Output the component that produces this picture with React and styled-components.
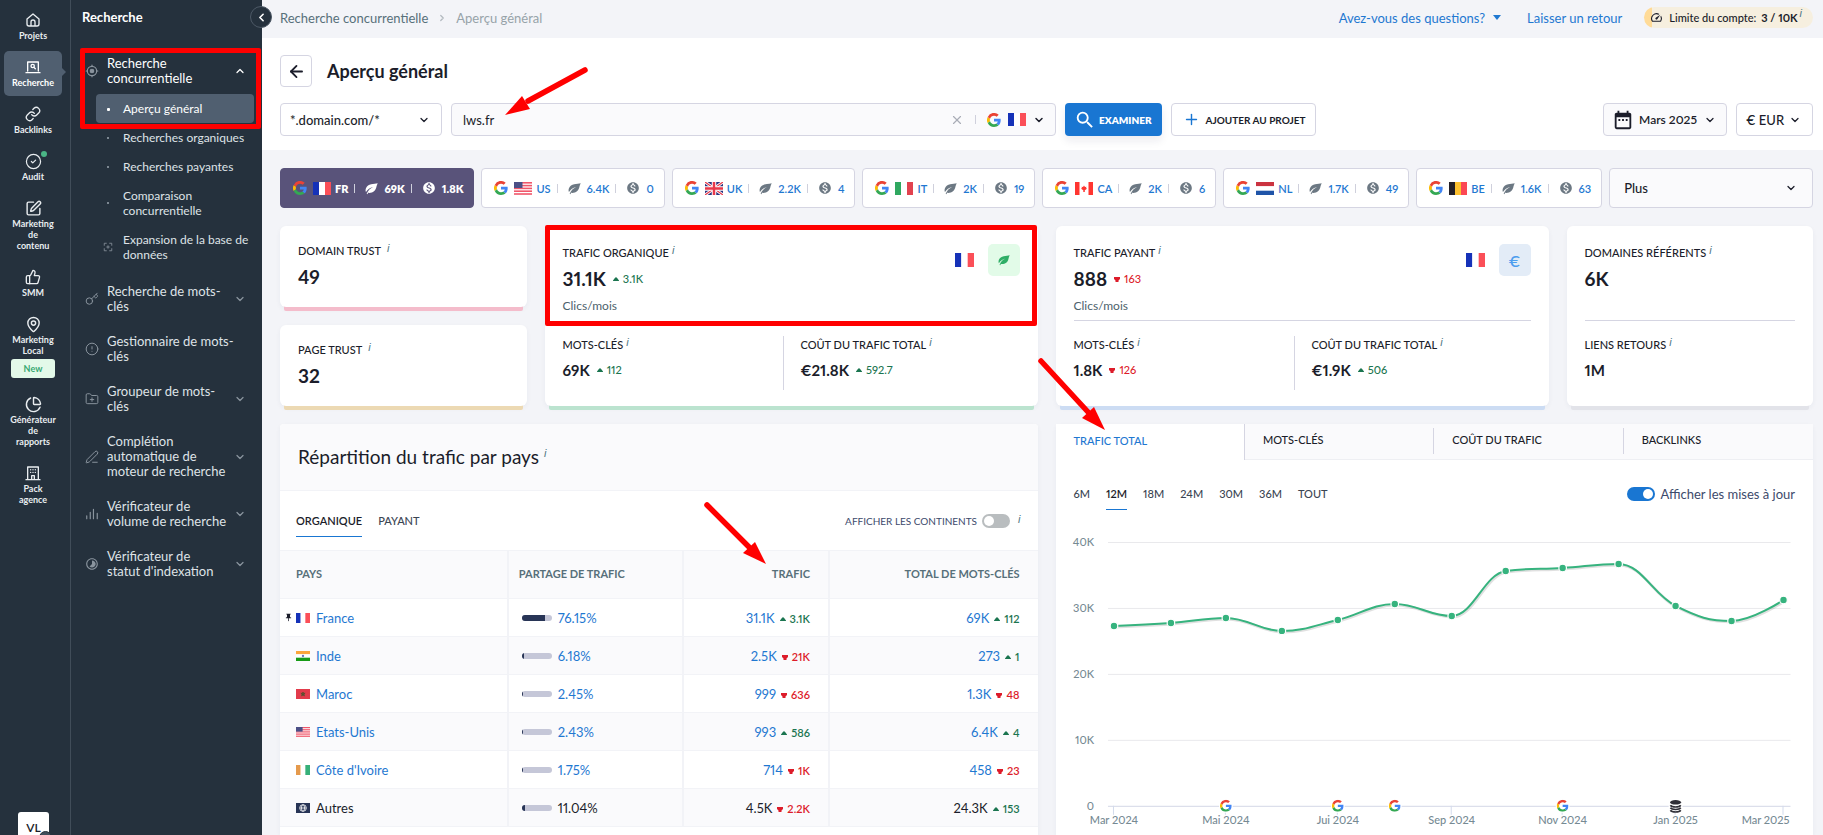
import React from "react";
import styled, { createGlobalStyle, css } from "styled-components";
import {
  ArrowLeft, ChartPie, ChevronDown, ChevronLeft, ChevronRight, ChevronUp, CircleAlert, CircleCheck,
  FolderPlus, Key, Link as LinkIcon, MapPin, PenLine, Plus, SquarePen, ThumbsUp, X,
} from "lucide-react";
import { MdDateRange, MdMonetizationOn, MdPushPin, MdSearch, MdSpeed, MdTimelapse } from "react-icons/md";

const c = {
  side: "#25313d", sideActive: "#505f70", bg: "#f3f4f8", soft: "#fafafc", line: "#f2f3f7",
  border: "#d5d5e2", text: "#1b1d2a", blue: "#1f78d1", green: "#1b7550", red: "#dd1c2a",
  muted: "#57707a", mark: "#ff0000",
};

const Global = createGlobalStyle`
  *, *::before, *::after { box-sizing: border-box; }
  body { margin: 0; background: ${c.bg}; }
  body, button, input, select { font-family: Lato, "Noto Sans", sans-serif; color: ${c.text}; font-variant-numeric: proportional-nums; }
  button { padding: 0; border: 0; background: none; text-align: inherit; cursor: pointer; }
  a { color: inherit; text-decoration: none; }
  svg { flex: none; display: block; }
  h1, h2, p, ul { margin: 0; padding: 0; }
`;

const Shell = styled.div`
  display: flex; height: 100vh; overflow: hidden;
`;

/* ---------- rail ---------- */
const Rail = styled.nav`
  display: flex; flex-direction: column; width: 71px; flex: none; padding: 4px 0 0;
  background: ${c.side}; border-right: 1px solid #414d59;
`;
const RailList = styled.ul`
  list-style: none; flex: 1; display: flex; flex-direction: column; gap: 2px; padding: 0 8px 0 4px;
`;
const RailLink = styled.a`
  position: relative; display: flex; flex-direction: column; align-items: center; gap: 2px;
  padding: 8px 0; border-radius: 5px; color: #e9edf0; font-size: 9px; font-weight: 700;
  line-height: 11px; text-align: center;
  ${(p) => p.$active && css`
    background: ${c.sideActive}; color: #fff;
    &::after { content: ""; position: absolute; right: -4px; top: 17px;
      border: 4px solid transparent; border-right: 0; border-left-color: ${c.sideActive}; }
  `}
`;
const Glyph = styled.span`height: 16px; display: grid; place-items: center;`;
const RailLabel = styled.span`white-space: pre-line;`;
const Dot = styled.span`
  position: absolute; top: 6px; right: 15px; width: 6px; height: 6px; border-radius: 50%; background: #4ab586;
`;
const NewBadge = styled.span`
  width: 44px; margin-top: 1px; padding: 4px 0; border-radius: 3px; background: #e3f9e9; color: #36a872;
`;
const Avatar = styled.button`
  position: relative; align-self: center; width: 31px; height: 31px; margin: 0 3px -8px 0; border-radius: 3px 3px 0 0;
  background: #fff; font-size: 12px; font-weight: 600; text-align: center; flex: none;
  &::after { content: ""; position: absolute; right: -3px; bottom: -1px; width: 13px; height: 13px;
    border-radius: 50%; background: #3f4d5b; border: 1px solid #25313d; }
`;

/* ---------- second level menu ---------- */
const Side = styled.nav`
  position: relative; width: 191px; flex: none; background: ${c.side}; color: #dfe3e7;
`;
const SideTitle = styled.p`
  padding: 8px 11px 20px; font-size: 13px; line-height: 18px; font-weight: 700; color: #fff;
`;
const Collapse = styled.button`
  position: absolute; z-index: 2; right: -10px; top: 6px; width: 22px; height: 22px; border-radius: 50%;
  display: grid; place-items: center; background: ${c.side}; border: 1px solid #4d5966; color: #fff;
`;
const Marked = styled.div`
  position: relative;
  &::after { content: ""; position: absolute; inset: 2px 1px -6px 9px; border: 5px solid ${c.mark};
    border-radius: 2px; pointer-events: none; }
`;
const SideItem = styled.a`
  display: flex; align-items: center; gap: 8px; padding: 10px 16px 10px 14px;
  font-size: 13px; line-height: 15px; color: ${(p) => (p.$open ? "#fff" : "#dfe3e7")};
  ${(p) => p.$open && "padding-bottom: 8px;"}
  svg { color: #8a949e; }
  svg:last-child { color: ${(p) => (p.$open ? "#fff" : "#8a949e")}; }
`;
const SideText = styled.span`flex: 1; white-space: pre-line;`;
const SubItem = styled.a`
  display: flex; align-items: center; margin: 0 8px 0 25px; padding: 7px 0 7px 27px; border-radius: 4px;
  font-size: 12px; line-height: 15px; position: relative; white-space: pre-line;
  ${(p) => p.$active && `background: ${c.sideActive}; color: #fff;`}
`;
const Bullet = styled.span`
  position: absolute; left: 11px; top: 50%; width: ${(p) => (p.$big ? 3 : 2)}px; height: ${(p) => (p.$big ? 3 : 2)}px;
  margin-top: -1px; background: ${(p) => (p.$big ? "#fff" : "#9aa4ae")}; border-radius: 1px;
`;
const BulletIcon = styled.span`position: absolute; left: 7px; top: 50%; margin-top: -5px; color: #8a949e;`;
const SubGroup = styled.div`padding-bottom: 5px;`;

/* ---------- main ---------- */
const Main = styled.main`
  flex: 1; min-width: 0; overflow-y: auto; scrollbar-width: none;
`;
const TopBar = styled.header`
  display: flex; align-items: center; height: 38px; padding: 0 10px 3px 18px; font-size: 13px;
`;
const Crumbs = styled.nav`
  display: flex; align-items: center; gap: 9px; flex: 1; color: ${c.muted};
  svg { color: #b3bac0; }
`;
const Current = styled.span`color: #97a3a9;`;
const TopLink = styled.a`
  display: flex; align-items: center; gap: 8px; margin-right: ${(p) => p.$gap}px; color: ${c.blue};
`;
const Caret = styled.span`border: 4px solid transparent; border-top: 5px solid ${c.blue}; border-bottom: 0;`;
const Limit = styled.span`
  display: flex; align-items: center; height: 21px; padding: 0 11px 0 6px; border-radius: 11px; font-size: 11px;
  font-weight: 500; background: linear-gradient(90deg, #ffdb98 8px, #f6efdf 8px);
  b { margin-left: 5px; font-weight: 700; }
  svg { margin-right: 6px; }
`;
const Tip = styled.sup`
  margin: ${(p) => p.$top ?? 0}px 0 0 ${(p) => p.$gap ?? 3}px; align-self: flex-start;
  font: italic 11px/11px "Liberation Sans", sans-serif; color: #4f7684;
`;
const Head = styled.section`background: #fff; padding: 17px 10px 14px 18px;`;
const TitleRow = styled.div`display: flex; align-items: center; gap: 15px; margin-bottom: 16px;`;
const Back = styled.button`
  width: 32px; height: 32px; border: 1px solid ${c.border}; border-radius: 4px; display: grid; place-items: center;
`;
const Title = styled.h1`font-size: 18px; line-height: 24px; font-weight: 700;`;
const Controls = styled.div`display: flex; gap: 9px;`;
const controlBox = css`
  height: 33px; border: 1px solid ${c.border}; border-radius: 4px; background: #fff;
`;
const SelectBox = styled.div`
  position: relative; ${controlBox} ${(p) => p.$w && `width: ${p.$w}px;`} ${(p) => p.$grow && "flex: 1;"}
  ${(p) => p.$tall && "height: 40px;"} ${(p) => p.$soft && `background: ${c.soft};`}
  svg { position: absolute; right: ${(p) => p.$right ?? 11}px; top: 50%; margin-top: -6px; pointer-events: none; }
  select { appearance: none; width: 100%; height: 100%; border: 0; background: none;
    padding: 0 0 0 ${(p) => p.$pad ?? 9}px; font-size: 13px; font-weight: 500; }
`;
const Search = styled.div`
  position: relative; flex: 0 1 605px; display: flex; align-items: center; gap: 11px; padding: 0 10px 0 0;
  ${controlBox} background: ${c.soft};
  input { flex: 1; min-width: 0; height: 100%; border: 0; outline: 0; background: none; padding: 0 0 0 11px; font-size: 13px; }
`;
const Clear = styled.button`color: #a9adb7; display: grid;`;
const Engine = styled.button`display: flex; align-items: center; gap: 7px;`;
const Sep = styled.span`width: 1px; height: 9px; background: #cfd0dc;`;
const Primary = styled.button`
  display: flex; align-items: center; gap: 3px; height: 33px; padding: 0 10px 0 9px; border-radius: 4px; background: #1976d2;
  color: #fff; font-size: 10px; font-weight: 800; box-shadow: 0 5px 9px rgba(20, 30, 80, .08);
`;
const Secondary = styled.button`
  display: flex; align-items: center; gap: 6px; ${controlBox} padding: 0 9px 0 11px; font-size: 10px; font-weight: 700;
  svg { color: #1976d2; }
`;
const Spacer = styled.span`flex: 1;`;
const DateButton = styled.button`
  display: flex; align-items: center; gap: 5px; ${controlBox} background: ${c.soft}; padding: 0 10px 0 8px;
  font-size: 12px; font-weight: 600;
  svg:last-child { margin-left: 2px; }
`;
const Page = styled.div`display: grid; gap: 18px; padding: 18px 10px 0 18px;`;
const Pills = styled.div`display: flex; gap: 7px;`;
const Pill = styled.button`
  display: flex; align-items: center; height: 40px; padding: 0 10px 0 12px; border-radius: 4px; font-size: 11px;
  font-weight: ${(p) => (p.$active ? 800 : 600)};
  border: 1px solid ${(p) => (p.$active ? "#59537a" : c.border)};
  background: ${(p) => (p.$active ? "#59537a" : "#fff")}; color: ${(p) => (p.$active ? "#fff" : c.blue)};
`;
const PillFlag = styled.span`margin-left: 6px;`;
const PillCode = styled.span`margin: 0 6px 0 4px;`;
const PillStat = styled.span`
  display: flex; align-items: center; gap: 6px; margin: 0 ${(p) => (p.$last ? 0 : 6)}px 0 10px;
  svg { color: ${(p) => (p.$active ? "#fff" : "#6c7883")}; }
`;

/* ---------- stat cards ---------- */
const Cards = styled.div`display: grid; grid-template-columns: 1fr 2fr 2fr 1fr; gap: 18px;`;
const Stack = styled.div`display: grid; gap: 18px;`;
const Card = styled.section`
  position: relative; min-width: 0; border-radius: 6px; background: #fff; padding: 17px 18px 0;
  height: ${(p) => (p.$short ? 81 : 180)}px;
  box-shadow: 0 8px 0 -4px ${(p) => p.$tone}, 0 2px 5px rgba(40, 50, 90, .05);
  ${(p) => p.$marked && `&::after { content: ""; position: absolute; inset: -1px 1px 80px 0; border: 5px solid ${c.mark}; border-radius: 2px; pointer-events: none; }`}
`;
const Label = styled.div`
  display: flex; font-size: 11px; line-height: 16px; font-weight: 500; white-space: nowrap;
`;
const Value = styled.div`
  display: flex; align-items: center; margin-top: ${(p) => (p.$small ? 8 : 9)}px; font-weight: 700;
  font-size: ${(p) => (p.$small ? 15 : 19)}px; line-height: 18px;
`;
const Delta = styled.span`
  display: inline-flex; align-items: baseline; gap: 4px; margin-left: ${(p) => (p.$cell ? 5 : 7)}px;
  font-size: 11px; font-weight: ${(p) => (p.$cell ? 600 : 500)}; color: ${(p) => (p.$up ? c.green : c.red)};
`;
const Top = styled.div`
  display: flex; justify-content: space-between; height: 78px; padding-top: 2px; border-bottom: 1px solid ${(p) => (p.$plain ? "transparent" : c.border)};
`;
const Unit = styled.p`margin-top: 9px; font-size: 12px; line-height: 18px; color: #4d626c;`;
const Badges = styled.div`display: flex; align-items: center; gap: 14px; height: 32px; margin-top: -1px;`;
const IconTile = styled.span`
  width: 32px; height: 32px; border-radius: 5px; display: grid; place-items: center;
  background: ${(p) => p.$bg}; color: ${(p) => p.$fg}; font-size: 16px; font-weight: 600;
`;
const Bottom = styled.div`
  display: grid; grid-template-columns: ${(p) => (p.$single ? "1fr" : "238px 1fr")}; padding-top: 15px;
`;
const Metric = styled.div`
  height: 54px; padding-top: 1px; ${(p) => p.$divided && `border-left: 1px solid ${c.border}; padding-left: 17px; margin-left: -18px;`}
`;

/* ---------- bottom panels ---------- */
const Panels = styled.div`display: grid; grid-template-columns: 1fr 1fr; gap: 18px;`;
const Panel = styled.section`
  position: relative; min-width: 0; background: #fff; border-radius: 4px 4px 0 0; box-shadow: 0 2px 5px rgba(40, 50, 90, .05);
`;
const PanelHead = styled.div`
  height: 67px; padding: 20px 18px; background: ${c.soft}; border-bottom: 1px solid ${c.line}; border-radius: 4px 4px 0 0;
`;
const PanelTitle = styled.h2`display: flex; font-size: 19px; line-height: 26px; font-weight: 400;`;
const TabBar = styled.div`display: flex; align-items: center; height: 59px; padding: 0 17px 0 16px; gap: 16px;`;
const ChartBar = styled.div`
  display: flex; align-items: center; gap: 16px; height: 65px; padding: 2px 18px 0;
`;
const Tab = styled.button`
  height: 33px; font-size: 11px; font-weight: ${(p) => (p.$active ? 600 : 500)};
  color: ${(p) => (p.$active ? c.text : "#3b4553")};
  border-bottom: 1px solid ${(p) => (p.$active ? "#1976d2" : "transparent")};
`;
const ToggleGroup = styled.span`display: flex; align-items: center; gap: 8px; margin-left: auto;`;
const Toggle = styled.label`
  display: flex; align-items: center; gap: 5px; margin-left: auto; color: #3d4a6b; font-size: ${(p) => p.$size}px;
`;
const Switch = styled.input`
  appearance: none; position: relative; width: 28px; height: 14px; margin: 0; border-radius: 7px; background: #b9bdbf;
  &::before { content: ""; position: absolute; top: 2px; left: 2px; width: 10px; height: 10px; border-radius: 50%; background: #fff; }
  &:checked { background: #1976d2; }
  &:checked::before { left: 16px; }
`;
const Table = styled.table`
  width: 100%; table-layout: fixed; border-collapse: separate; border-spacing: 0; font-size: 13px;
  th { height: 49px; background: ${c.soft}; font-size: 11px; font-weight: 700; color: ${c.muted}; border-top: 1px solid ${c.line}; text-align: left; padding-bottom: 3px; }
  td { height: 38px; color: ${c.blue}; }
  th, td { padding-left: 10px; padding-right: 18px; border-bottom: 1px solid ${c.line}; border-right: 2px solid ${c.line}; }
  th:first-child, td:first-child { padding-left: 16px; }
  th:last-child, td:last-child { border-right: 0; }
  th:nth-child(n+3), td:nth-child(n+3) { text-align: right; padding-left: 0; }
  tbody tr:nth-child(even) { background: ${c.soft}; }
  tbody tr:last-child td { color: ${c.text}; }
`;
const Country = styled.span`display: flex; align-items: center; gap: 6px; position: relative;`;
const Pin = styled.span`position: absolute; left: -12px;`;
const Share = styled.span`display: flex; align-items: center; gap: 6px; padding-left: 3px;`;
const Bar = styled.span`
  width: 30px; height: 6px; border-radius: 3px; background: #c5c7d8; overflow: hidden;
  span { display: block; height: 100%; background: #283556; }
`;
const ChartTabs = styled.div`
  display: grid; grid-template-columns: repeat(4, 1fr); height: 36px; background: ${c.soft};
`;
const ChartTab = styled.button`
  position: relative; padding: 0 0 4px 18px; font-size: 11px; font-weight: 500;
  ${(p) => p.$active
    ? `background: #fff; color: ${c.blue}; border-right: 1px solid ${c.border};`
    : `border-bottom: 1px solid #eeeff3;`}
  ${(p) => p.$split && `&::after { content: ""; position: absolute; right: 0; top: 4px; height: 26px; width: 1px; background: ${c.border}; }`}
`;
const Chart = styled.svg`
  width: 100%; height: auto;
  text { font-size: 11px; font-weight: 500; fill: #768a93; }
`;
const ArrowSvg = styled.svg`
  position: absolute; z-index: 3; left: 0; top: 0; pointer-events: none; overflow: visible;
`;

/* ---------- drawings ---------- */
const Google = ({ size = 14 }) => (
  <svg width={size} height={size} viewBox="0 0 48 48" aria-hidden="true">
    <path fill="#fbbc05" d="M10.5 28.6A14.6 14.6 0 0 1 10.5 19.4l-8-6.1a24 24 0 0 0 0 21.4z" />
    <path fill="#ea4335" d="M24 9.5c3.5 0 6.7 1.2 9.2 3.6l6.900-6.900A24 24 0 0 0 2.500 13.300l8 6.100C12.400 13.700 17.700 9.500 24 9.500z" />
    <path fill="#34a853" d="M24 48c6.500 0 11.900-2.100 15.900-5.800l-7.700-6c-2.200 1.500-4.900 2.300-8.200 2.300-6.300 0-11.600-4.200-13.500-9.900l-8 6.100A24 24 0 0 0 24 48z" />
    <path fill="#4285f4" d="M46.900 24.500c0-1.600-.2-3.100-.4-4.500H24v9.100h12.900a11 11 0 0 1-4.700 7.100l7.700 6c4.500-4.200 7-10.300 7-17.700z" />
  </svg>
);
const Leaf = ({ size = 13 }) => (
  <svg width={size} height={size} viewBox="0 0 24 24" fill="currentColor" aria-hidden="true">
    <path d="M23.500 2.500C17 4.500 5 3 1.800 11.500c-1 2.700-.9 5 0 7C5 13.500 9 10.800 15 9.200 9.500 11.800 6 15 3 21.800l1.700.6.900-2.400c9 .8 13.700-3.800 15.200-9.700.8-3.300 1.400-5.500 2.700-7.800z" />
  </svg>
);

const bandsV = (a, b, d) => <><path fill={a} d="M0 0h6v13H0z" /><path fill={b} d="M6 0h6v13H6z" /><path fill={d} d="M12 0h6v13h-6z" /></>;
const bandsH = (a, b, d) => <><path fill={a} d="M0 0h18v4.300H0z" /><path fill={b} d="M0 4.300h18v4.400H0z" /><path fill={d} d="M0 8.700h18V13H0z" /></>;
const flags = {
  FR: bandsV("#1632b8", "#fff", "#fb4f58"),
  IT: bandsV("#2fa860", "#fff", "#e2424f"),
  BE: bandsV("#231f26", "#fdc02f", "#fb4753"),
  CI: bandsV("#e59a4c", "#fff", "#36b079"),
  NL: bandsH("#cb3340", "#fff", "#1f54a8"),
  IN: <>{bandsH("#fba63c", "#fff", "#179b17")}<circle cx="9" cy="6.500" r="1.500" fill="#6a76b8" /></>,
  MA: <><path fill="#e23b4b" d="M0 0h18v13H0z" /><path fill="#57502f" d="M9 4l.8 1.700h1.900l-1.500 1.200.6 2L9 7.800l-1.800 1.100.6-2-1.500-1.200h1.900z" stroke="#57502f" /></>,
  US: <><path fill="#fff" d="M0 0h18v13H0z" />{[0, 1, 2, 3, 4].map((i) => <path key={i} fill="#f0566a" d={`M0 ${i * 2.8}h18v1.600H0z`} />)}<path fill="#4b4f86" d="M0 0h8.500v6H0z" /></>,
  UK: <><path fill="#29337e" d="M0 0h18v13H0z" /><path stroke="#fff" strokeWidth="3" d="M0 0l18 13M18 0L0 13" /><path stroke="#e8384a" strokeWidth="1.200" d="M0 0l18 13M18 0L0 13" /><path stroke="#fff" strokeWidth="4.500" d="M9 0v13M0 6.500h18" /><path stroke="#e8384a" strokeWidth="2.500" d="M9 0v13M0 6.500h18" /></>,
  CA: <><path fill="#fff" d="M0 0h18v13H0z" /><path fill="#ff3530" d="M0 0h4.500v13H0zM13.500 0H18v13h-4.500zM9 3.500l1 1.500 1.500-.2-.5 1.200 1 .8-2.200 1.400V10h-1.500V8.200L6 6.800l1-.8-.5-1.200L8 5z" /></>,
  XX: <><path fill="#283556" d="M0 0h18v13H0z" /><g fill="none" stroke="#fff"><circle cx="9" cy="6.500" r="4.300" /><ellipse cx="9" cy="6.500" rx="2" ry="4.300" /><path d="M5 6.500h8" /></g></>,
};
const Flag = ({ code, w = 18, h = 13 }) => (
  <svg width={w} height={h} viewBox="0 0 18 13" preserveAspectRatio="none" aria-hidden="true">{flags[code]}</svg>
);
const Stroke = ({ size = 16, w = 2, children }) => (
  <svg width={size} height={size} viewBox="0 0 24 24" fill="none" stroke="currentColor" strokeWidth={w} strokeLinecap="round" strokeLinejoin="round" aria-hidden="true">{children}</svg>
);
const Triangle = ({ up }) => (
  <svg width="6" height="7" viewBox="0 0 6 7" aria-hidden="true">
    <path fill="currentColor" d={up ? "M3 1 4.500 2.500 6 4.500V5H0v-.5l1.500-2z" : "M0 1h6v2L4.500 4.500V6h-3V4.500L0 3z"} />
  </svg>
);
const Trend = ({ up, value, cell }) => <Delta $up={up} $cell={cell}><Triangle up={up} />{value}</Delta>;

const Arrow = ({ from, head: [tip, a, b, neck] }) => (
  <ArrowSvg width="1" height="1" aria-hidden="true">
    <path d={`M${from.join(" ")}L${neck.join(" ")}`} stroke={c.mark} strokeWidth="5.500" strokeLinecap="round" />
    <path d={`M${tip.join(" ")}L${a.join(" ")}L${b.join(" ")}z`} fill={c.mark} />
  </ArrowSvg>
);

/* ---------- data ---------- */
const rail = [
  { label: "Projets", icon: <Stroke><path d="M3 10.500 12 3l9 7.500V18a3 3 0 0 1-3 3H6a3 3 0 0 1-3-3zM9 21v-6a3 3 0 0 1 6 0v6" /></Stroke> },
  { label: "Recherche", active: true, icon: <Stroke><path d="M4 18V4.500h16V18M1.500 20.500h21" /><circle cx="11.500" cy="10.500" r="2.500" /><path d="m13.500 12.500 2 2.200" /></Stroke> },
  { label: "Backlinks", icon: <LinkIcon size={16} /> },
  { label: "Audit", icon: <CircleCheck size={17} strokeWidth={1.7} />, dot: true },
  { label: "Marketing\nde\ncontenu", icon: <SquarePen size={17} /> },
  { label: "SMM", icon: <ThumbsUp size={16} /> },
  { label: "Marketing\nLocal", icon: <MapPin size={17} />, badge: "New" },
  { label: "Générateur\nde\nrapports", icon: <ChartPie size={17} /> },
  { label: "Pack\nagence", icon: <Stroke><path d="M4 21V3h16v18M1.500 22h21M10 21v-5h4v5M8.500 7v.1M12 7v.1M15.500 7v.1M8.500 11v.1M12 11v.1M15.500 11v.1" /></Stroke> },
];
const menu = [
  { label: "Recherche de mots-\nclés", icon: <Key size={14} strokeWidth={1.7} />, more: true },
  { label: "Gestionnaire de mots-\nclés", icon: <CircleAlert size={14} strokeWidth={1.7} /> },
  { label: "Groupeur de mots-\nclés", icon: <FolderPlus size={14} strokeWidth={1.7} />, more: true },
  { label: "Complétion\nautomatique de\nmoteur de recherche", icon: <PenLine size={14} strokeWidth={1.7} />, more: true },
  { label: "Vérificateur de\nvolume de recherche", icon: <Stroke size={14}><path d="M3 20v-5M9 20V9M14.500 20V4M21 20V11" /></Stroke>, more: true },
  { label: "Vérificateur de\nstatut d'indexation", icon: <MdTimelapse size={14} />, more: true },
];
const markets = [
  ["FR", "69K", "1.8K"], ["US", "6.4K", "0"], ["UK", "2.2K", "4"], ["IT", "2K", "19"],
  ["CA", "2K", "6"], ["NL", "1.7K", "49"], ["BE", "1.6K", "63"],
];
const rows = [
  ["FR", "France", 76.15, "31.1K", true, "3.1K", "69K", true, "112"],
  ["IN", "Inde", 6.18, "2.5K", false, "21K", "273", true, "1"],
  ["MA", "Maroc", 2.45, "999", false, "636", "1.3K", false, "48"],
  ["US", "Etats-Unis", 2.43, "993", true, "586", "6.4K", true, "4"],
  ["CI", "Côte d'Ivoire", 1.75, "714", false, "1K", "458", false, "23"],
  ["XX", "Autres", 11.04, "4.5K", false, "2.2K", "24.3K", true, "153"],
];
const points = [
  [58, 101], [115, 98], [170, 93], [226, 106], [282, 95], [339, 79], [396, 91],
  [450, 46], [507, 43], [563, 39], [620, 81], [676, 96], [728, 75],
];
const grid = [["40K", 17], ["30K", 83], ["20K", 149], ["10K", 215], ["0", 281]];
const months = [["Mar 2024", 58], ["Mai 2024", 170], ["Jui 2024", 282], ["Sep 2024", 396], ["Nov 2024", 507], ["Jan 2025", 620]];

/* Smooth curve through the points, without overshooting at peaks and troughs. */
function spline(pts) {
  let d = `M${pts[0][0]} ${pts[0][1]}`;
  let prev = pts[0];
  for (let i = 1; i < pts.length; i++) {
    const [x, y] = pts[i];
    let left = [x, y];
    let right = [x, y];
    if (i < pts.length - 1) {
      const [lx, ly] = pts[i - 1];
      const [nx, ny] = pts[i + 1];
      left = [(1.5 * x + lx) / 2.5, (1.5 * y + ly) / 2.5];
      right = [(1.5 * x + nx) / 2.5, (1.5 * y + ny) / 2.5];
      const fix = ((right[1] - left[1]) * (right[0] - x)) / (right[0] - left[0]) + y - right[1];
      left[1] += fix;
      right[1] += fix;
      const l = Math.min(Math.max(left[1], Math.min(ly, y)), Math.max(ly, y));
      if (l !== left[1]) { left[1] = l; right[1] = 2 * y - l; }
      const r = Math.min(Math.max(right[1], Math.min(ny, y)), Math.max(ny, y));
      if (r !== right[1]) { right[1] = r; left[1] = 2 * y - r; }
    }
    d += `C${prev[0]} ${prev[1]} ${left[0]} ${left[1]} ${x} ${y}`;
    prev = right;
  }
  return d;
}

const Stat = ({ label, value, small, up, delta, gap }) => (
  <>
    <Label>{label}<Tip $gap={gap}>i</Tip></Label>
    <Value $small={small}>{value}{delta && <Trend up={up} value={delta} />}</Value>
  </>
);

function Sidebar() {
  return (
    <>
      <Rail aria-label="Navigation principale">
        <RailList>
          {rail.map((r) => (
            <li key={r.label}>
              <RailLink href="#" $active={r.active}>
                <Glyph>{r.icon}</Glyph>
                <RailLabel>{r.label}</RailLabel>
                {r.dot && <Dot />}
                {r.badge && <NewBadge>{r.badge}</NewBadge>}
              </RailLink>
            </li>
          ))}
        </RailList>
        <Avatar>VL</Avatar>
      </Rail>
      <Side aria-label="Recherche">
        <SideTitle>Recherche</SideTitle>
        <Collapse aria-label="Réduire le menu"><ChevronLeft size={13} strokeWidth={3} /></Collapse>
        <Marked>
          <SideItem href="#" $open>
            <Stroke size={14}><path d="M12 2v2M12 20v2M2 12h2M20 12h2" /><circle cx="12" cy="12" r="8" /><circle cx="12" cy="12" r="3" fill="currentColor" /></Stroke>
            <SideText>{"Recherche\nconcurrentielle"}</SideText>
            <ChevronUp size={12} strokeWidth={2.5} />
          </SideItem>
          <SubItem href="#" $active><Bullet $big />Aperçu général</SubItem>
        </Marked>
        <SubGroup>
          <SubItem href="#"><Bullet />Recherches organiques</SubItem>
          <SubItem href="#"><Bullet />Recherches payantes</SubItem>
          <SubItem href="#"><Bullet />{"Comparaison\nconcurrentielle"}</SubItem>
          <SubItem href="#">
            <BulletIcon><Stroke size={10}><path d="M3 8V3h5M16 3h5v5M21 16v5h-5M8 21H3v-5M12 9v6M9 12h6" /></Stroke></BulletIcon>
            {"Expansion de la base de\ndonnées"}
          </SubItem>
        </SubGroup>
        {menu.map((m) => (
          <SideItem href="#" key={m.label}>
            {m.icon}<SideText>{m.label}</SideText>{m.more && <ChevronDown size={12} strokeWidth={2.5} />}
          </SideItem>
        ))}
      </Side>
    </>
  );
}

const TrafficCard = ({ tone, marked, title, value, up, delta, tile, kw, cost }) => (
  <Card $tone={tone} $marked={marked}>
    <Top $plain={marked}>
      <div>
        <Stat label={title} value={value} up={up} delta={delta} />
        <Unit>Clics/mois</Unit>
      </div>
      <Badges><Flag code="FR" w={19} h={14} />{tile}</Badges>
    </Top>
    <Bottom>
      <Metric><Stat small label="MOTS-CLÉS" {...kw} /></Metric>
      <Metric $divided><Stat small label="COÛT DU TRAFIC TOTAL" {...cost} /></Metric>
    </Bottom>
  </Card>
);

export default function App() {
  return (
    <Shell>
      <Global />
      <Sidebar />
      <Main>
        <TopBar>
          <Crumbs aria-label="Fil d'Ariane">
            <a href="#">Recherche concurrentielle</a><ChevronRight size={10} strokeWidth={3} /><Current>Aperçu général</Current>
          </Crumbs>
          <TopLink href="#" $gap={26}>Avez-vous des questions?<Caret /></TopLink>
          <TopLink href="#" $gap={22}>Laisser un retour</TopLink>
          <Limit><MdSpeed size={13} />Limite du compte: <b>3 / 10K</b><Tip $gap={2} $top={1}>i</Tip></Limit>
        </TopBar>
        <Head>
          <TitleRow>
            <Back aria-label="Retour"><ArrowLeft size={19} strokeWidth={2.3} /></Back>
            <Title>Aperçu général</Title>
          </TitleRow>
          <Controls>
            <SelectBox $w={162}>
              <select aria-label="Portée"><option>*.domain.com/*</option></select><ChevronDown size={12} strokeWidth={2.5} />
            </SelectBox>
            <Search>
              <input aria-label="Domaine" defaultValue="lws.fr" />
              <Clear aria-label="Effacer"><X size={14} /></Clear><Sep />
              <Engine aria-label="Moteur de recherche"><Google /><Flag code="FR" /><ChevronDown size={12} strokeWidth={3} /></Engine>
              <Arrow from={[133, -34]} head={[[53, 11], [70, -8], [78, 5], [76, -3]]} />
            </Search>
            <Primary><MdSearch size={22} />EXAMINER</Primary>
            <Secondary><Plus size={17} />AJOUTER AU PROJET</Secondary>
            <Spacer />
            <DateButton><MdDateRange size={22} />Mars 2025<ChevronDown size={12} strokeWidth={2.5} /></DateButton>
            <SelectBox $w={77}>
              <select aria-label="Devise"><option>€ EUR</option></select><ChevronDown size={12} strokeWidth={2.5} />
            </SelectBox>
          </Controls>
        </Head>
        <Page>
          <Pills>
            {markets.map(([code, organic, paid], i) => (
              <Pill key={code} $active={i === 0}>
                <Google /><PillFlag><Flag code={code} /></PillFlag><PillCode>{code}</PillCode><Sep />
                <PillStat $active={i === 0}><Leaf />{organic}</PillStat><Sep />
                <PillStat $active={i === 0} $last><MdMonetizationOn size={14} />{paid}</PillStat>
              </Pill>
            ))}
            <SelectBox $grow $tall $soft $pad={14} $right={15}>
              <select aria-label="Plus de pays"><option>Plus</option></select><ChevronDown size={12} strokeWidth={2.5} />
            </SelectBox>
          </Pills>
          <Cards>
            <Stack>
              <Card $short $tone="#f4bccb"><Stat label="DOMAIN TRUST" value="49" gap={6} /></Card>
              <Card $short $tone="#ecd9b3"><Stat label="PAGE TRUST" value="32" gap={6} /></Card>
            </Stack>
            <TrafficCard
              tone="#bbe3cf" marked title="TRAFIC ORGANIQUE" value="31.1K" up delta="3.1K"
              tile={<IconTile $bg="#e2fbe8" $fg="#2fae66"><Leaf size={12} /></IconTile>}
              kw={{ value: "69K", up: true, delta: "112" }} cost={{ value: "€21.8K", up: true, delta: "592.7" }}
            />
            <TrafficCard
              tone="#ccdcf3" title="TRAFIC PAYANT" value="888" delta="163"
              tile={<IconTile $bg="#e3ecf7" $fg="#4d9dee">€</IconTile>}
              kw={{ value: "1.8K", delta: "126" }} cost={{ value: "€1.9K", up: true, delta: "506" }}
            />
            <Card $tone="#e2e3e9">
              <Top><div><Stat label="DOMAINES RÉFÉRENTS" value="6K" /></div></Top>
              <Bottom $single><Metric><Stat small label="LIENS RETOURS" value="1M" /></Metric></Bottom>
            </Card>
          </Cards>
          <Panels>
            <Panel>
              <PanelHead><PanelTitle>Répartition du trafic par pays<Tip $gap={5} $top={4}>i</Tip></PanelTitle></PanelHead>
              <TabBar>
                <Tab $active>ORGANIQUE</Tab><Tab>PAYANT</Tab>
                <ToggleGroup>
                  <Toggle $size={10}>AFFICHER LES CONTINENTS<Switch type="checkbox" /></Toggle>
                  <Tip $gap={0}>i</Tip>
                </ToggleGroup>
              </TabBar>
              <Table>
                <colgroup><col width="30.2%" /><col width="23.2%" /><col width="19.2%" /><col /></colgroup>
                <thead><tr><th>PAYS</th><th>PARTAGE DE TRAFIC</th><th>TRAFIC</th><th>TOTAL DE MOTS-CLÉS</th></tr></thead>
                <tbody>
                  {rows.map(([code, name, share, traffic, up, delta, kw, kwUp, kwDelta], i) => (
                    <tr key={name}>
                      <td><Country>{i === 0 && <Pin><MdPushPin size={9} color={c.text} /></Pin>}<Flag code={code} w={14} h={10} />{name}</Country></td>
                      <td><Share><Bar><span style={{ width: `${share}%` }} /></Bar>{share}%</Share></td>
                      <td>{traffic}<Trend cell up={up} value={delta} /></td>
                      <td>{kw}<Trend cell up={kwUp} value={kwDelta} /></td>
                    </tr>
                  ))}
                </tbody>
              </Table>
              <Arrow from={[427, 81]} head={[[486, 140], [475, 118], [463, 129], [469, 123]]} />
            </Panel>
            <Panel>
              <ChartTabs>
                <ChartTab $active>TRAFIC TOTAL</ChartTab><ChartTab $split>MOTS-CLÉS</ChartTab>
                <ChartTab $split>COÛT DU TRAFIC</ChartTab><ChartTab>BACKLINKS</ChartTab>
              </ChartTabs>
              <ChartBar>
                {["6M", "12M", "18M", "24M", "30M", "36M", "TOUT"].map((r) => <Tab key={r} $active={r === "12M"}>{r}</Tab>)}
                <Toggle $size={13}><Switch type="checkbox" defaultChecked />Afficher les mises à jour</Toggle>
              </ChartBar>
              <Chart viewBox="0 0 758 310" role="img" aria-label="Trafic total sur 12 mois">
                {grid.map(([label, y]) => (
                  <g key={label}>
                    <path d={`M52 ${y}.500H735`} stroke={label === "0" ? "#d3d7e6" : "#e9e9ec"} />
                    <text x="38" y={y + 4} textAnchor="end">{label}</text>
                  </g>
                ))}
                {[...months, ["", 728]].map(([m, x]) => <path key={x} d={`M${x - 0.5} 281v9`} stroke="#d3dbec" />)}
                {months.map(([m, x]) => <text key={m} x={x} y="299" textAnchor="middle">{m}</text>)}
                <text x="734" y="299" textAnchor="end">Mar 2025</text>
                <path d={spline(points)} fill="none" stroke="#000" strokeOpacity=".12" strokeWidth="3" transform="translate(1 1)" />
                <path d={spline(points)} fill="none" stroke="#36b37e" strokeWidth="2" />
                {points.map(([x, y]) => <circle key={x} cx={x} cy={y} r="3.800" fill="#36b37e" stroke="#fff" strokeWidth="1.200" />)}
                {[170, 282, 339, 507].map((x) => (
                  <g key={x}><circle cx={x} cy="281" r="7" fill="#fff" /><g transform={`translate(${x - 6} 275)`}><Google size={12} /></g></g>
                ))}
                <g transform="translate(614 275)">
                  <path fill="#fff" d="M-1 2h14v9H-1z" />
                  <ellipse cx="6" cy="2.500" rx="5.500" ry="2.300" fill="#303038" />
                  <path d="M.8 5.500c1.500 2.200 8.900 2.200 10.400 0M.8 8c1.500 2.200 8.900 2.200 10.400 0M.8 10.500c1.500 2.200 8.900 2.200 10.400 0" fill="none" stroke="#303038" strokeWidth="1.600" />
                </g>
              </Chart>
              <Arrow from={[-15, -63]} head={[[49, 6], [38, -17], [26, -6], [32, -12]]} />
            </Panel>
          </Panels>
        </Page>
      </Main>
    </Shell>
  );
}
